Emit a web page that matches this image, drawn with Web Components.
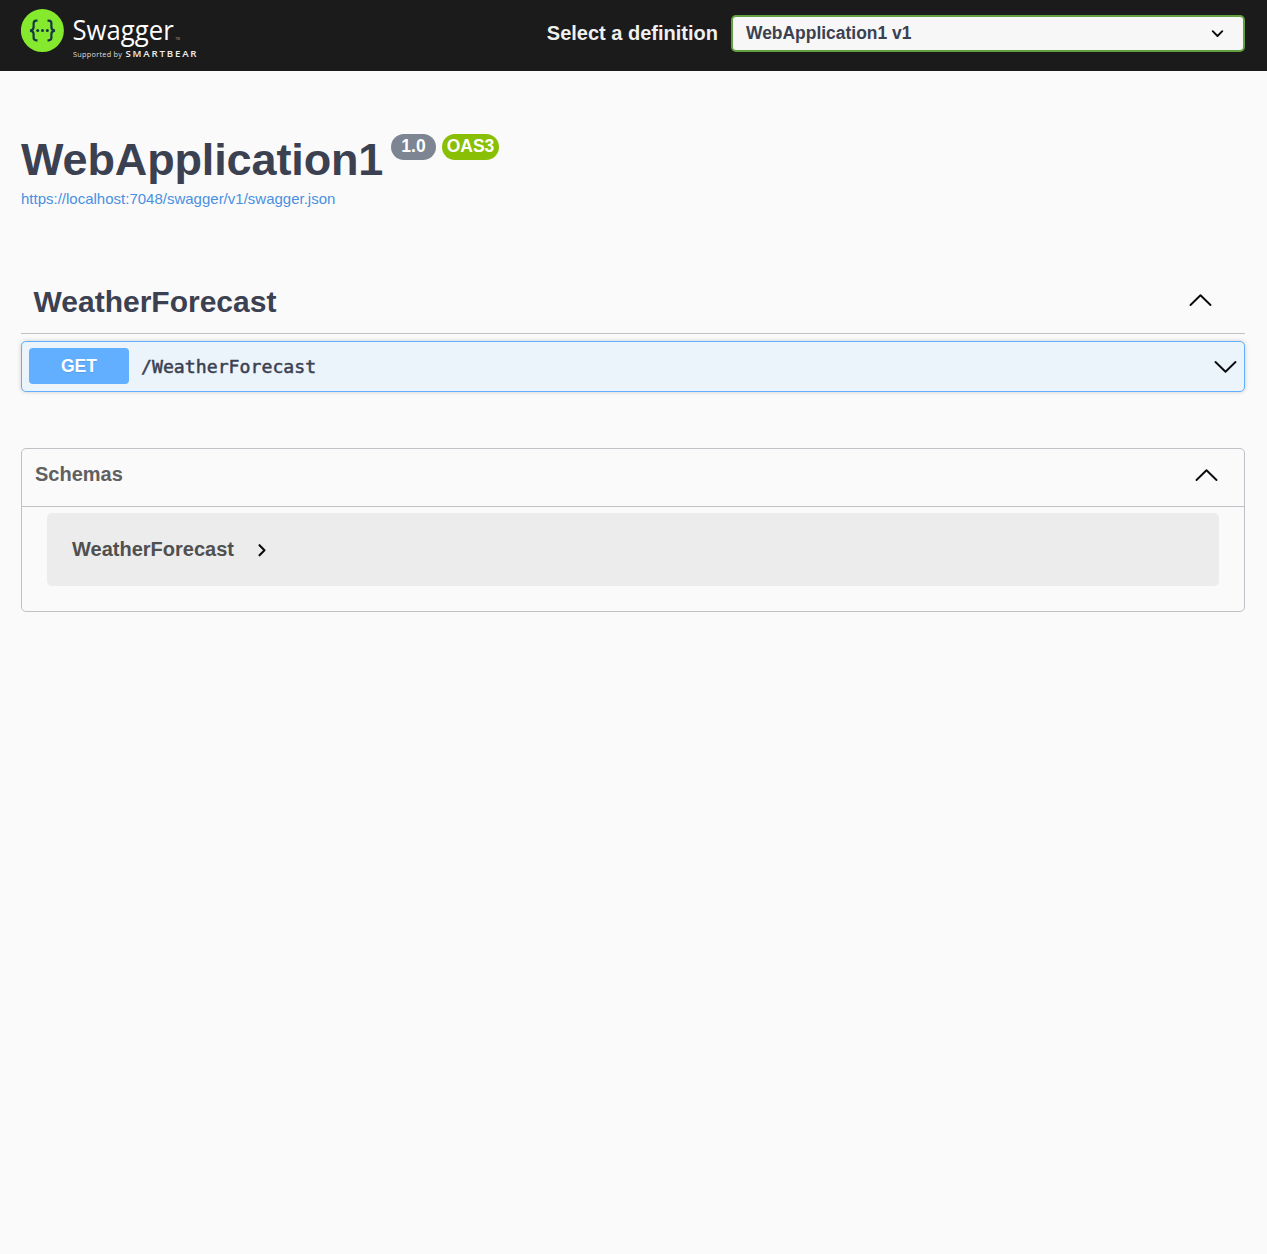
<!DOCTYPE html>
<html lang="en">
<head>
<meta charset="utf-8">
<title>Swagger UI</title>
<style>
html,body{margin:0;background:#fafafa}
body{min-height:1254px;font-family:"Liberation Sans",Arial,sans-serif;color:#3b4151}
</style>
</head>
<body>
<swagger-app></swagger-app>
<script>
const define = (name, html) => {
  const t = document.createElement('template');
  t.innerHTML = html;
  customElements.define(name, class extends HTMLElement {
    constructor() {
      super();
      this.attachShadow({ mode: 'open' }).append(t.content.cloneNode(true));
    }
  });
};

class ArrowIcon extends HTMLElement {
  connectedCallback() {
    const shapes = {
      up: ['0 0 24 14', 24, 14, 'M1.5 12 11.500 2.300 21.500 12', 1.9],
      down: ['0 0 24 14', 24, 14, 'M1.5 2 11.500 11.700 21.500 2', 1.9],
      select: ['0 0 14 9', 14, 9, 'M1.700 2.200 6.500 7 11.300 2.200', 1.9],
      right: ['0 0 10 14', 10, 14, 'M2.500 2.200 7.500 7.300 2.500 12.300', 2.1]
    };
    const [box, w, h, d, s] = shapes[this.getAttribute('kind')];
    this.attachShadow({ mode: 'open' }).innerHTML =
      `<style>:host{display:block;flex:none}svg{display:block}</style>
       <svg width="${w}" height="${h}" viewBox="${box}" fill="none" stroke="#0b0b0f" stroke-width="${s}" stroke-linecap="round" stroke-linejoin="round"><path d="${d}"/></svg>`;
  }
}
customElements.define('arrow-icon', ArrowIcon);

define('swagger-logo', `
<style>:host{display:block;flex:none}svg{display:block}</style>
<svg width="180" height="71" viewBox="0 0 180 71">
  <circle cx="21.4" cy="30.6" r="21.5" fill="#85ea2d"/>
  <g fill="none" stroke="#173647" stroke-width="2.2">
    <path d="M16.500 20.700h-1.300q-2.600 0-2.600 2.700v3.700q0 3.300-3.600 3.500 3.600.2 3.600 3.500V37.600q0 2.700 2.600 2.700h1.300"/>
    <path d="M26.500 20.700h1.300q2.600 0 2.600 2.700v3.700q0 3.300 3.600 3.500-3.600.2-3.600 3.500V37.600q0 2.700-2.600 2.700h-1.300"/>
  </g>
  <g fill="#173647"><circle cx="16.700" cy="30.600" r="1.500"/><circle cx="21.500" cy="30.600" r="1.500"/><circle cx="26.300" cy="30.600" r="1.500"/></g>
  <g fill="#fff" font-family="Open Sans, sans-serif">
    <text transform="translate(51.500 39.800) scale(.925 1)" font-size="27.800">Swagger</text>
    <text x="154.500" y="39.500" font-size="3" fill="#aaa">TM</text>
    <text x="52" y="57" font-size="7.300" textLength="49" fill="#ddd">Supported by</text>
    <text x="104.500" y="57" font-size="9.700" font-weight="600" textLength="71" fill="#eee">SMARTBEAR</text>
  </g>
</svg>`);

define('definition-select', `
<style>
:host{display:flex;align-items:center;gap:13px}
.label{font:bold 20px/28px "Liberation Sans",Arial,sans-serif;color:#f0f0f0;padding-bottom:1px;white-space:nowrap}
.select{box-sizing:border-box;width:514px;height:37px;border:2px solid #62a03f;border-radius:5px;background:#f7f7f7;display:flex;align-items:center;justify-content:space-between;padding:0 18.500px 0 13px;font:bold 17.450px/32px "Liberation Sans",Arial,sans-serif;color:#3b4151}
.select span{padding-bottom:1px}
</style>
<span class="label"><slot name="label"></slot></span>
<div class="select"><span><slot></slot></span><arrow-icon kind="select"></arrow-icon></div>`);

define('top-bar', `
<style>
:host{display:flex;box-sizing:border-box;height:71px;background:#1b1b1b;padding:0 22px 0 21px;justify-content:space-between;align-items:flex-start}
definition-select{margin-top:15px}
</style>
<swagger-logo></swagger-logo>
<definition-select><span slot="label">Select a definition</span>WebApplication1 v1</definition-select>`);

define('version-badge', `
<style>
:host{display:block;box-sizing:border-box;height:26px;border-radius:13px;background:var(--badge,#7d8492);color:#fff;font:bold 17.500px/24px "Liberation Sans",Arial,sans-serif;text-align:center;width:var(--w,45px)}
</style><slot></slot>`);

define('api-info', `
<style>
:host{display:block;padding:63px 21px 0}
.row{display:flex;align-items:flex-start;height:51px}
h2{box-sizing:border-box;width:362px;margin:0 8px 0 0;font-size:45px;line-height:51px;letter-spacing:-.13px}
version-badge{margin-right:6px}
.oas{--badge:#89bf04;--w:57px}
a{display:block;margin-top:4px;font-size:15px;line-height:20px;color:#4990e2;text-decoration:none}
</style>
<div class="row"><h2>WebApplication1</h2><version-badge>1.0</version-badge><version-badge class="oas">OAS3</version-badge></div>
<a>https://localhost:7048/swagger/v1/swagger.json</a>`);

define('operation-row', `
<style>
:host{display:flex;align-items:center;box-sizing:border-box;height:51px;border:1px solid #61affe;border-radius:5px;background:#ebf3fb;box-shadow:0 0 4px rgba(0,0,0,.19);padding:0 6px 0 7px}
.method{width:100px;height:36px;margin-bottom:1px;border-radius:4px;background:#61affe;color:#fff;text-align:center;font-weight:bold;font-size:17.500px;line-height:36px;text-shadow:0 1px 0 rgba(0,0,0,.1)}
.path{flex:1;padding-left:12px;font:18.200px/28px "DejaVu Sans Mono",monospace;-webkit-text-stroke:.5px #3b4151}
</style>
<span class="method"><slot name="method"></slot></span><span class="path"><slot></slot></span><arrow-icon kind="down"></arrow-icon>`);

define('tag-section', `
<style>
:host{display:block;margin:72px 22px 0 21px}
.head{display:flex;box-sizing:border-box;height:53px;border-bottom:1px solid #c0c2c5;justify-content:space-between;padding:1px 32px 0 12.500px;margin-bottom:7px}
h3{margin:0;font-size:30px;line-height:40px}
arrow-icon{margin-top:11px}
</style>
<div class="head"><h3>WeatherForecast</h3><arrow-icon kind="up"></arrow-icon></div>
<operation-row><span slot="method">GET</span>/WeatherForecast</operation-row>`);

define('model-card', `
<style>
:host{display:flex;align-items:center;gap:23px;box-sizing:border-box;height:73px;border-radius:5px;background:#ececec;padding:0 25px;color:#505050;font-weight:bold;font-size:20px;line-height:28px}
span{padding-bottom:1px}arrow-icon{margin-top:1px}
</style>
<span><slot></slot></span><arrow-icon kind="right"></arrow-icon>`);

define('schema-section', `
<style>
:host{display:block;box-sizing:border-box;height:164px;margin:56px 22px 0 21px;border:1px solid #c0c1c7;border-radius:5px}
.head{display:flex;box-sizing:border-box;height:58px;border-bottom:1px solid #c0c1c7;justify-content:space-between;padding:11px 25px 0 13px;margin-bottom:6px}
h4{margin:0;font-size:20px;line-height:28px;color:#606060}
.head arrow-icon{margin-top:8px}
model-card{margin:0 25px}
</style>
<div class="head"><h4>Schemas</h4><arrow-icon kind="up"></arrow-icon></div>
<model-card>WeatherForecast</model-card>`);

define('swagger-app', `
<style>:host{display:block}</style>
<top-bar></top-bar><api-info></api-info><tag-section></tag-section><schema-section></schema-section>`);
</script>
</body>
</html>
